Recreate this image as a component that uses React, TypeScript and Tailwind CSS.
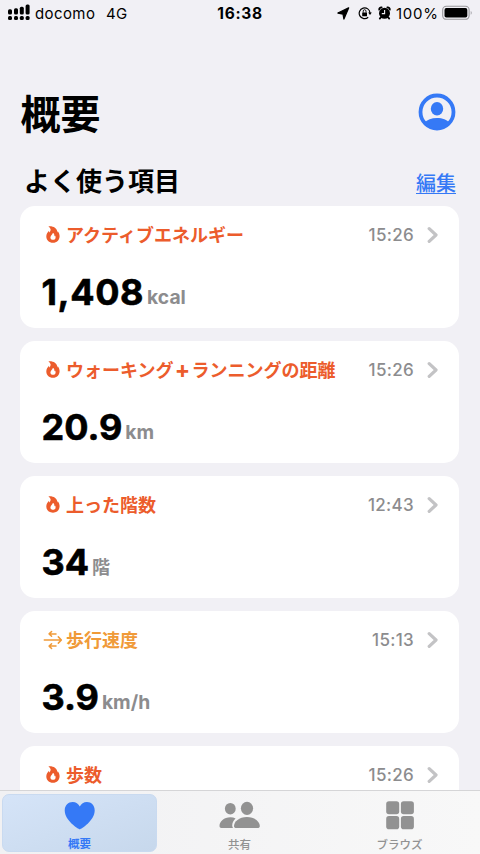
import React from 'react';

type Kind = 'activity' | 'mobility';

interface Metric {
    id: string;
    kind: Kind;
    title: React.ReactNode;
    time: string;
    value?: string;
    unit?: string;
}

const Plus = () => (
    <span className="inline-block w-[18px] text-center text-[14px] leading-[18px] relative -top-[1px] [-webkit-text-stroke:1.4px_currentColor]">＋</span>
);

const metrics: Metric[] = [
    { id: 'energy', kind: 'activity', title: 'アクティブエネルギー', time: '15:26', value: '1,408', unit: 'kcal' },
    { id: 'distance', kind: 'activity', title: <>ウォーキング<Plus />ランニングの距離</>, time: '15:26', value: '20.9', unit: 'km' },
    { id: 'floors', kind: 'activity', title: '上った階数', time: '12:43', value: '34', unit: '階' },
    { id: 'speed', kind: 'mobility', title: '歩行速度', time: '15:13', value: '3.9', unit: 'km/h' },
    { id: 'steps', kind: 'activity', title: '歩数', time: '15:26' },
];

const FlameIcon = () => (
    <svg className="w-[14px] h-[17px]" viewBox="0 0 14 17" fill="currentColor">
        <path
            fillRule="evenodd"
            d="M2.4 0.4C7.6 -0.1 10.6 2.3 11.1 5.1C11.2 5.7 11.2 6.1 11.1 6.5C11.6 6.2 11.7 5.6 11.6 4.9C12.9 6.5 13.6 8.3 13.6 10.2C13.6 14 10.8 16.7 7 16.7C3.1 16.7 0.3 14 0.3 10.4C0.3 7.9 1.5 6.3 3.1 4.8C3 5.5 3.1 6 3.5 6.4C5.3 4.5 5 2.2 2.4 0.4ZM6.8 6.8C6.9 8.3 4.4 9.3 4.4 11.4C4.4 12.9 5.5 13.8 7 13.8C8.5 13.8 9.6 12.9 9.6 11.4C9.6 10.5 9.4 9.9 9 9.4C9 9.8 8.8 10.1 8.4 10.2C8.5 8.8 8.1 7.5 6.8 6.8Z"
        />
    </svg>
);

const MobilityIcon = () => (
    <svg className="w-[20px] h-[20px]" viewBox="0 0 20 20" fill="none" stroke="currentColor" strokeWidth="1.5" strokeLinecap="round" strokeLinejoin="round">
        <path d="M1.3 10H18.3M15.3 6.9L18.4 10L15.3 13.1" />
        <path d="M13 3.9H6.2M8.6 1.5L6.1 3.9L8.6 6.3" />
        <path d="M13 16.1H6.2M8.6 13.7L6.1 16.1L8.6 18.5" />
    </svg>
);

const ChevronIcon = () => (
    <svg className="w-[12px] h-[18px]" viewBox="0 0 12 18" fill="none" stroke="#c3c3c5" strokeWidth="3.2" strokeLinecap="round" strokeLinejoin="round">
        <path d="M2.2 2.7L9 9L2.2 15.3" />
    </svg>
);

const ProfileIcon = () => (
    <svg className="w-[38px] h-[38px]" viewBox="0 0 38 38" fill="#3579f6">
        <circle cx="19" cy="19" r="16.5" fill="none" stroke="#3579f6" strokeWidth="3.8" />
        <ellipse cx="19" cy="15.8" rx="6.2" ry="6.8" />
        <path d="M6.6 29.6C9 26.6 13.5 24.9 19 24.9C24.5 24.9 29 26.6 31.4 29.6C28.6 34 24 36 19 36C14 36 9.4 34 6.6 29.6Z" />
    </svg>
);

const StatusBar = () => (
    <div className="h-[26px] shrink-0 flex items-center pl-2 pr-[7px] text-black text-[15px] leading-[26px] relative">
        <svg className="w-[22px] h-[18px] shrink-0" viewBox="0 0 22 18" fill="black">
            <rect x="0" y="5.2" width="4" height="5.2" rx="1.5" />
            <rect x="6" y="4.2" width="4" height="6.2" rx="1.5" />
            <rect x="11.8" y="2.7" width="4" height="7.7" rx="1.5" />
            <rect x="17.6" y="0.6" width="4" height="9.8" rx="1.5" />
            <rect x="0" y="12" width="4" height="4" rx="1.5" />
            <rect x="6" y="12" width="4" height="4" rx="1.5" />
            <rect x="11.8" y="12" width="4" height="4" rx="1.5" />
            <rect x="17.6" y="12" width="4" height="4" rx="1.5" />
        </svg>
        <span className="ml-[5px] mt-[1px] w-[71px] tracking-[0.4px]">docomo</span>
        <span className="mt-[1px] tracking-[0.4px]">4G</span>
        <span className="absolute top-[1px] left-0 right-0 text-center font-bold text-[15.5px] tracking-[0.65px]">16:38</span>
        <div className="ml-auto flex items-center">
            <svg className="w-[13px] h-[13px]" viewBox="0 0 13 13">
                <path d="M11.6 0.9L0.9 6L6 7L6.9 12Z" fill="black" stroke="black" strokeWidth="1.3" strokeLinejoin="round" />
            </svg>
            <svg className="ml-[8px] w-[14px] h-[14px]" viewBox="0 0 14 14" fill="none" stroke="black" strokeWidth="1.2">
                <path d="M10.2 11.3A5.4 5.4 0 1 1 12 7" />
                <path d="M10.2 6.5H13.8L12 9Z" fill="black" stroke="none" />
                <rect x="4.2" y="6.4" width="4.8" height="3.8" rx="0.5" fill="black" stroke="none" />
                <path d="M5.2 6.7V5.2A1.4 1.5 0 0 1 8 5.2V6.7" strokeWidth="0.9" />
            </svg>
            <svg className="ml-[6px] w-[13px] h-[14px]" viewBox="0 0 13 14">
                <circle cx="6.5" cy="7.3" r="5.5" fill="black" />
                <path d="M1.2 3.6A2 2 0 0 1 3.6 1.5M9.4 1.5A2 2 0 0 1 11.8 3.6M2.8 11.4L1.8 12.6M10.2 11.4L11.2 12.6" fill="none" stroke="black" strokeWidth="1.8" strokeLinecap="round" />
                <path d="M6.6 4V7.6H3.8" fill="none" stroke="#f1f0f5" strokeWidth="1.1" />
            </svg>
            <span className="ml-[5px] mt-[1px] w-[46px] whitespace-nowrap tracking-[0.75px]">100%</span>
            <svg className="w-[31px] h-[16px]" viewBox="0 0 31 16">
                <rect x="0.7" y="1.3" width="26.4" height="13" rx="3.6" fill="none" stroke="#98979b" strokeWidth="1.1" />
                <rect x="2.5" y="3.1" width="22.8" height="9.4" rx="1.8" fill="black" />
                <path d="M28.7 6C30.2 6.6 30.2 9.1 28.7 9.7Z" fill="#aaa9ad" />
            </svg>
        </div>
    </div>
);

const MetricCard: React.FC<{ metric: Metric }> = ({ metric }) => (
    <div className="h-[122px] shrink-0 bg-white rounded-[15px]">
        <div className="flex items-start h-[26px] mt-4 pl-[23px] pr-[20px]">
            <div className={`flex items-start ${metric.kind === 'activity' ? 'text-[#ec5c2c]' : 'text-[#f09a38]'}`}>
                {metric.kind === 'activity'
                    ? <span className="w-[20px] ml-[3px] pt-[4px]"><FlameIcon /></span>
                    : <span className="w-[23px] pt-[3px]"><MobilityIcon /></span>}
                <h3 className="mt-[1px] text-[18px] leading-[26px] font-bold whitespace-nowrap">{metric.title}</h3>
            </div>
            <span className="ml-auto text-[17px] leading-[26px] font-medium text-[#8c8c8e] tracking-[0.3px]">{metric.time}</span>
            <span className="ml-[13px] mt-[4px]"><ChevronIcon /></span>
        </div>
        {metric.value && (
            <div className="flex items-baseline mt-[22px] pl-[21.5px] leading-[44px]">
                <span className={`text-[36px] font-bold text-black [-webkit-text-stroke:0.6px_black] ${metric.id === 'energy' ? 'tracking-[0.6px]' : ''}`}>{metric.value}</span>
                <span className={`ml-[3px] relative -top-[1px] font-bold text-[#8c8c8e] ${metric.unit === '階' ? 'text-[18px]' : 'text-[19.3px]'}`}>{metric.unit}</span>
            </div>
        )}
    </div>
);

const TabBar = () => (
    <nav className="h-[64px] shrink-0 border-t border-[#d5d5d7] bg-linear-to-r from-[#f1f1f3] to-[#f8f8f8] grid grid-cols-3 text-[11.5px] leading-[14px] font-medium text-[#929292]">
        <div className="mt-[3px] ml-[2px] mr-[3px] h-[58px] rounded-[7px] border border-[#c9daf0] bg-linear-to-br from-[#d5e4f8] to-[#c7d8ec] flex flex-col items-center text-[#3579f6]">
            <svg className="mt-[6px] w-[32px] h-[30px]" viewBox="0 0 32 30" fill="currentColor">
                <path d="M15.8 29.2C14.4 29.2 0.2 20.2 0.2 9.8C0.2 4.5 3.9 1.1 8.4 1.1C11.8 1.1 14.4 3 15.8 5.8C17.2 3 19.8 1.1 23.2 1.1C27.7 1.1 31.2 4.5 31.2 9.8C31.2 20.2 17.2 29.2 15.8 29.2Z" />
            </svg>
            <span className="mt-[7px] font-bold">概要</span>
        </div>
        <div className="flex flex-col items-center pr-[1px]">
            <svg className="mt-[9px] w-[42px] h-[31px]" viewBox="0 0 42 31" fill="currentColor">
                <ellipse cx="11.3" cy="8.7" rx="5.4" ry="5.8" />
                <ellipse cx="28" cy="8.3" rx="6.1" ry="6.6" />
                <path d="M2.4 28C0.9 28 0.5 27.1 0.5 25.8C0.5 21.5 5 17.2 11.4 17.2C13.4 17.2 15.1 17.6 16.6 18.4C14.5 20.3 13.2 22.7 13.2 25.6C13.2 26.5 13.5 27.4 14 28Z" />
                <path d="M17.4 28C15.8 28 15 27.2 15 25.9C15 22 20 17 27.9 17C35.9 17 40.8 22 40.8 25.9C40.8 27.2 40 28 38.4 28Z" />
            </svg>
            <span className="mt-[7px]">共有</span>
        </div>
        <div className="flex flex-col items-center pr-[1px]">
            <svg className="mt-[9px] w-[28px] h-[31px]" viewBox="0 0 28 31" fill="currentColor">
                <rect x="0.2" y="1.2" width="13" height="13.1" rx="2.8" />
                <rect x="14.9" y="1.2" width="13" height="13.1" rx="2.8" />
                <rect x="0.2" y="16.1" width="13" height="13.1" rx="2.8" />
                <rect x="14.9" y="16.1" width="13" height="13.1" rx="2.8" />
            </svg>
            <span className="mt-[7px]">ブラウズ</span>
        </div>
    </nav>
);

export default function App() {
    return (
        <div className="w-full h-[854px] overflow-hidden flex flex-col bg-[#f1f0f5] font-[Inter,'Noto_Sans_CJK_JP',sans-serif]">
            <StatusBar />
            <header className="mt-[60px] h-[54px] shrink-0 pl-[20.5px] pr-[24px] flex items-start justify-between">
                <h1 className="mt-[2px] text-[40px] leading-[54px] font-bold text-black">概要</h1>
                <span className="mt-[7px]"><ProfileIcon /></span>
            </header>
            <div className="mt-[24px] h-[36px] shrink-0 pl-[24px] pr-[24px] flex items-start justify-between">
                <h2 className="text-[26px] leading-[36px] font-bold text-black">よく使う項目</h2>
                <a className="mt-[6px] text-[20px] leading-[28px] font-medium text-[#3579f6] underline underline-offset-[2px] decoration-1">編集</a>
            </div>
            <main className="mt-[6px] pl-[20px] pr-[21px] flex-1 min-h-0 overflow-hidden flex flex-col gap-[13px]">
                {metrics.map(metric => (
                    <MetricCard key={metric.id} metric={metric} />
                ))}
            </main>
            <TabBar />
        </div>
    );
}
